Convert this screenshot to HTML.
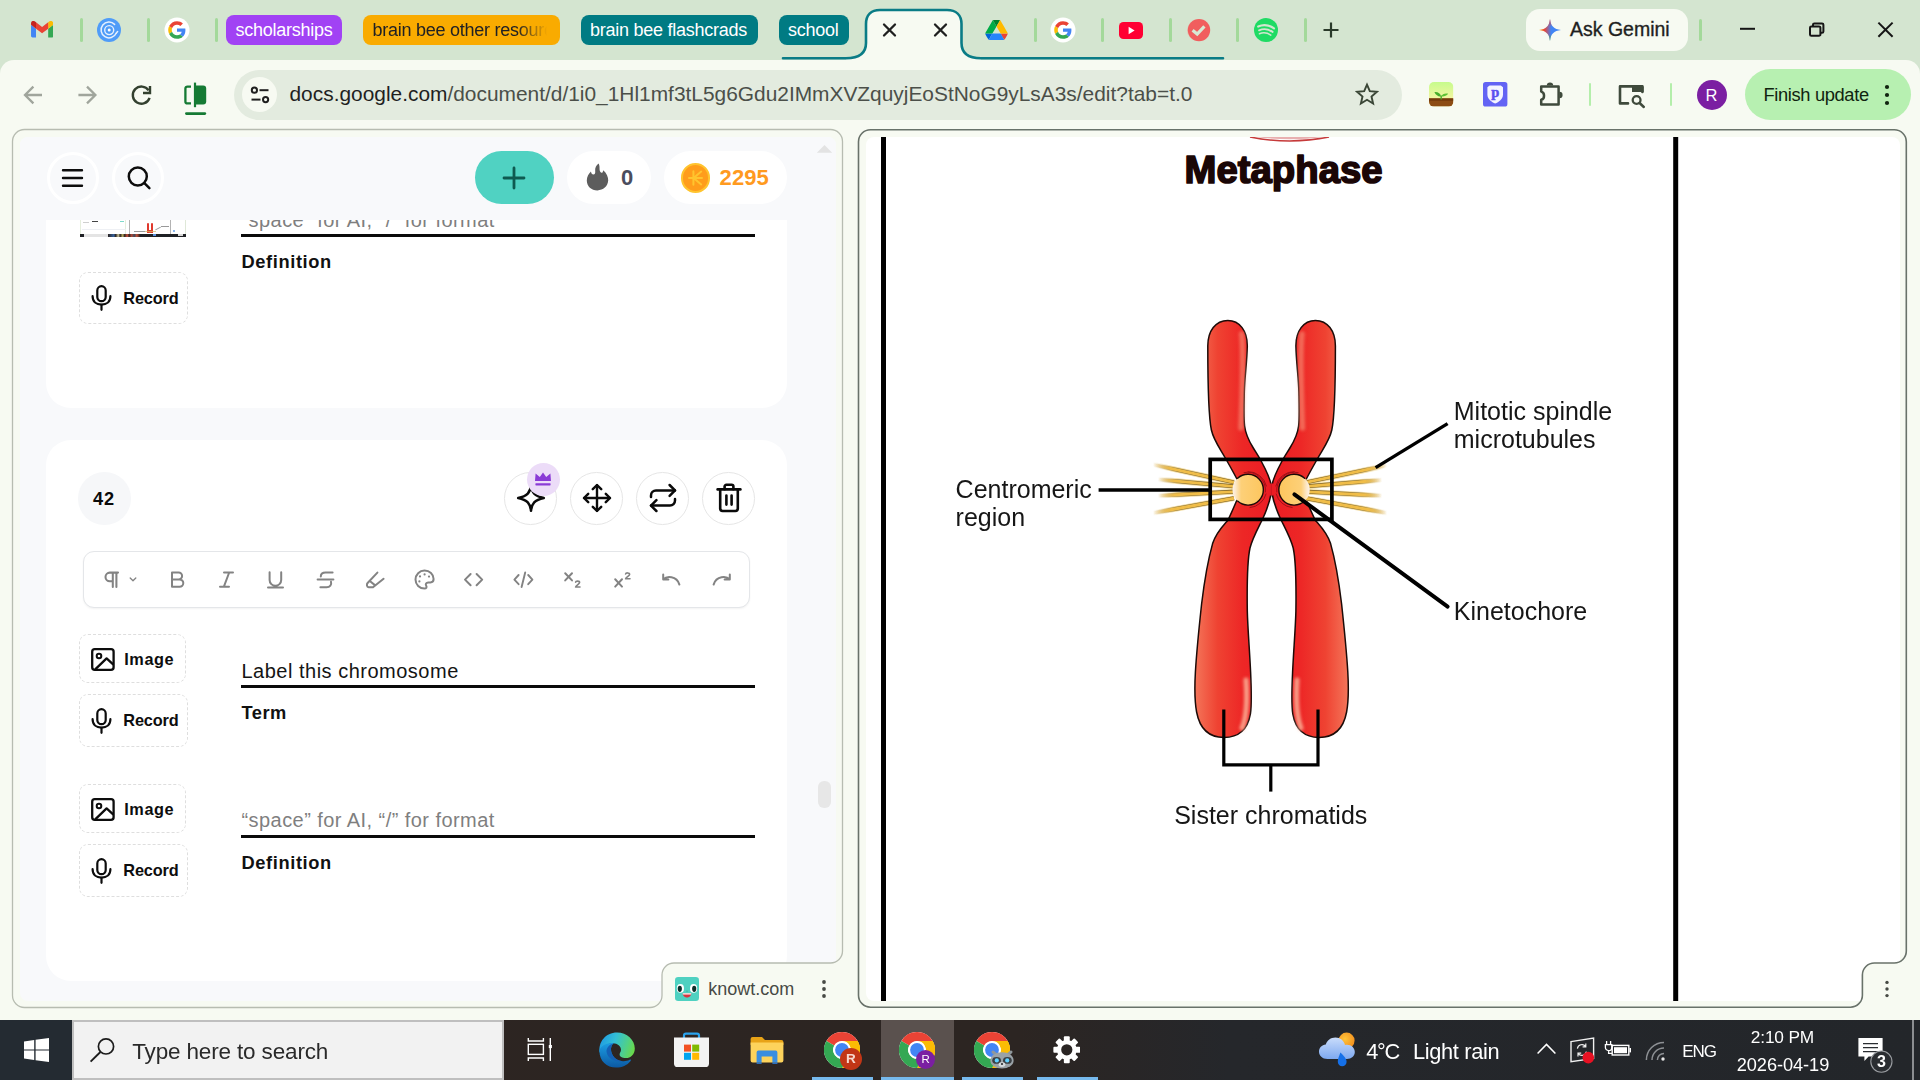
<!DOCTYPE html>
<html><head><meta charset="utf-8">
<style>
*{box-sizing:border-box}
html,body{margin:0;padding:0}
body{width:1920px;height:1080px;position:relative;overflow:hidden;background:#f7faf2;font-family:"Liberation Sans",sans-serif;color:#1f1f1f}
.abs{position:absolute}
.t{position:absolute;white-space:nowrap;line-height:1}
#tabstrip{left:0;top:0;width:1920px;height:80px;background:#d4e5d0}
#toolbar{left:0;top:60px;width:1920px;height:70px;background:#f7faf2;border-radius:14px 14px 0 0}
.sep{position:absolute;width:3px;border-radius:2px;background:#a3d99a}
.chip{position:absolute;top:15px;height:30px;border-radius:8px}
#urlbar{left:234px;top:69.5px;width:1168px;height:50px;border-radius:25px;background:#e3ebdf}
#taskbar{left:0;top:1020px;width:1920px;height:60px;background:linear-gradient(90deg,#2d2522 0%,#2c2522 53%,#25272b 64%,#23262a 100%)}

.circ{top:472px;width:52.6px;height:52.6px;border-radius:50%;border:1px solid #e6e6e6;background:#fff}
.imgbtn,.recbtn{border:1px dashed #dedede;border-radius:9px;background:#fff}
.btxt{font-size:16.3px;font-weight:bold;color:#0d0d0d}
</style></head>
<body>
<svg width="0" height="0" style="position:absolute"><defs>
<g id="mic"><rect x="6.3" y="1.2" width="8.4" height="15" rx="4.2" fill="none" stroke="#0d0d0d" stroke-width="2.2"/><path d="M1.6 11.2 C1.6 16.6 5.4 19.6 10.5 19.6 C15.6 19.6 19.4 16.6 19.4 11.2" fill="none" stroke="#0d0d0d" stroke-width="2.2" stroke-linecap="round"/><path d="M10.5 19.8 V24.8" stroke="#0d0d0d" stroke-width="2.2" stroke-linecap="round"/></g>
<g id="imgico"><rect x="1.2" y="1.2" width="21.4" height="20.6" rx="2.6" fill="none" stroke="#0d0d0d" stroke-width="2.3"/><circle cx="8" cy="8" r="2.3" fill="none" stroke="#0d0d0d" stroke-width="2"/><path d="M4.2 21.4 L15.6 10.4 L22.4 16.6" fill="none" stroke="#0d0d0d" stroke-width="2.3" stroke-linejoin="round"/></g>
</defs></svg>
<!-- ===== TAB STRIP ===== -->
<div id="tabstrip" class="abs"></div>
<div id="toolbar" class="abs"></div>
<!--TABS-START-->
<!-- active tab + group underline -->
<svg class="abs" style="left:0;top:0" width="1920" height="62" viewBox="0 0 1920 62">
  <path d="M846 58.5 C858 58.5 866 54 866 43 L866 24 C866 15 871 10 880 10 L947 10 C956 10 961.5 15 961.5 24 L961.5 43 C961.5 54 969 58.5 981 58.5 L981 62 L846 62 Z" fill="#f7faf2"/>
  <path d="M783 58.2 L846 58.2 C858 58.2 866 54 866 43 L866 24 C866 15 871 10 880 10 L947 10 C956 10 961.5 15 961.5 24 L961.5 43 C961.5 54 969 58.2 981 58.2 L1223 58.2" fill="none" stroke="#0a7c86" stroke-width="2.6" stroke-linecap="round" stroke-linejoin="round"/>
  <!-- tab close Xs -->
  <g stroke="#1f1f1f" stroke-width="2.3" stroke-linecap="round">
    <path d="M884 24.5 L895 35.5 M895 24.5 L884 35.5"/>
    <path d="M935 24.5 L946 35.5 M946 24.5 L935 35.5"/>
  </g>
</svg>
<!-- Gmail -->
<svg class="abs" style="left:31px;top:21.4px" width="22.2" height="16.6" viewBox="0 0 24 18">
  <path d="M0 2.2 V16.4 A1.6 1.6 0 0 0 1.6 18 H5.4 V8.3 L0 4.2Z" fill="#4285f4"/>
  <path d="M18.6 18 H22.4 A1.6 1.6 0 0 0 24 16.4 V4.2 L18.6 8.3Z" fill="#34a853"/>
  <path d="M18.6 1.4 V8.3 L24 4.2 V2.4 C24 0.2 21.6 -0.8 20 0.4Z" fill="#fbbc04"/>
  <path d="M5.4 8.3 V1.4 L12 6.4 L18.6 1.4 V8.3 L12 13.3Z" fill="#ea4335"/>
  <path d="M0 2.4 V4.2 L5.4 8.3 V1.4 L4 0.4 C2.4 -0.8 0 0.2 0 2.4Z" fill="#c5221f"/>
</svg>
<div class="sep" style="left:80px;top:18px;height:24px"></div>
<!-- blue swirl icon -->
<svg class="abs" style="left:97px;top:18px" width="24" height="24" viewBox="0 0 24 24">
  <circle cx="12" cy="12" r="12" fill="#4f9cf8"/>
  <path d="M19.2 15.2 A7.9 7.9 0 1 1 17.6 6.4" fill="none" stroke="#e6f0fe" stroke-width="1.5" stroke-linecap="round"/>
  <path d="M19.2 15.2 L20.6 13.6" fill="none" stroke="#e6f0fe" stroke-width="1.5" stroke-linecap="round"/>
  <circle cx="12.2" cy="12.1" r="4.5" fill="none" stroke="#e6f0fe" stroke-width="1.4"/>
  <circle cx="12.2" cy="12.1" r="1.5" fill="#fff"/>
</svg>
<div class="sep" style="left:147px;top:18px;height:24px"></div>
<!-- Google G 1 -->
<svg class="abs gicon" style="left:164px;top:17px" width="26" height="26" viewBox="0 0 26 26">
  <circle cx="13" cy="13" r="12.5" fill="#fff"/>
  <g transform="translate(4.2,4.2) scale(0.3667)">
  <path fill="#EA4335" d="M24 9.5c3.54 0 6.71 1.22 9.21 3.6l6.85-6.85C35.9 2.38 30.47 0 24 0 14.62 0 6.51 5.38 2.56 13.22l7.98 6.19C12.43 13.72 17.74 9.5 24 9.5z"/>
  <path fill="#4285F4" d="M46.98 24.55c0-1.57-.15-3.09-.38-4.55H24v9.02h12.94c-.58 2.96-2.26 5.48-4.78 7.18l7.73 6c4.51-4.18 7.09-10.36 7.09-17.65z"/>
  <path fill="#FBBC05" d="M10.53 28.59c-.48-1.45-.76-2.99-.76-4.59s.27-3.14.76-4.59l-7.98-6.19C.92 16.46 0 20.12 0 24c0 3.88.92 7.54 2.56 10.78l7.97-6.19z"/>
  <path fill="#34A853" d="M24 48c6.48 0 11.93-2.13 15.89-5.81l-7.73-6c-2.15 1.45-4.92 2.3-8.16 2.3-6.26 0-11.57-4.22-13.47-9.91l-7.98 6.19C6.51 42.62 14.62 48 24 48z"/>
  </g>
</svg>
<div class="sep" style="left:215px;top:18px;height:24px"></div>
<!-- chips -->
<div class="chip" style="left:226px;width:116px;background:#a142f4"></div>
<div class="t" id="c1" style="left:235.5px;top:20.6px;font-size:18px;letter-spacing:-0.25px;color:#fff">scholarships</div>
<div class="chip" style="left:363px;width:196.5px;background:#f9ab00"></div>
<div class="t" id="c2" style="left:372.5px;top:20.6px;font-size:18px;letter-spacing:-0.25px;color:#202124;width:176px;overflow:hidden;-webkit-mask-image:linear-gradient(90deg,#000 82%,transparent 99%)">brain bee other resource</div>
<div class="chip" style="left:580.5px;width:177px;background:#007b83"></div>
<div class="t" id="c3" style="left:590px;top:20.6px;font-size:18px;letter-spacing:-0.25px;color:#fff">brain bee flashcrads</div>
<div class="chip" style="left:779px;width:70px;background:#007b83"></div>
<div class="t" id="c4" style="left:788px;top:20.6px;font-size:18px;letter-spacing:-0.25px;color:#fff">school</div>
<!-- Drive -->
<svg class="abs" style="left:985px;top:20px" width="23" height="20" viewBox="0 0 87.3 78">
  <path d="m6.6 66.85 3.85 6.65c.8 1.4 1.95 2.5 3.3 3.3l13.75-23.8h-27.5c0 1.55.4 3.1 1.2 4.5z" fill="#0066da"/>
  <path d="m43.65 25-13.75-23.8c-1.35.8-2.5 1.9-3.3 3.3l-25.4 44a9.06 9.06 0 0 0 -1.2 4.5h27.5z" fill="#00ac47"/>
  <path d="m73.55 76.8c1.35-.8 2.5-1.9 3.3-3.3l1.6-2.75 7.65-13.25c.8-1.4 1.2-2.95 1.2-4.5h-27.502l5.852 11.5z" fill="#ea4335"/>
  <path d="m43.65 25 13.75-23.8c-1.35-.8-2.9-1.2-4.5-1.2h-18.5c-1.6 0-3.15.45-4.5 1.2z" fill="#00832d"/>
  <path d="m59.8 53h-32.3l-13.75 23.8c1.35.8 2.9 1.2 4.5 1.2h50.8c1.6 0 3.15-.45 4.5-1.2z" fill="#2684fc"/>
  <path d="m73.4 26.5-12.7-22c-.8-1.4-1.95-2.5-3.3-3.3l-13.75 23.8 16.15 28h27.45c0-1.55-.4-3.1-1.2-4.5z" fill="#ffba00"/>
</svg>
<div class="sep" style="left:1034px;top:18px;height:24px"></div>
<!-- Google G 2 -->
<svg class="abs" style="left:1050px;top:17px" width="26" height="26" viewBox="0 0 26 26">
  <circle cx="13" cy="13" r="12.5" fill="#fff"/>
  <g transform="translate(4.2,4.2) scale(0.3667)">
  <path fill="#EA4335" d="M24 9.5c3.54 0 6.71 1.22 9.21 3.6l6.85-6.85C35.9 2.38 30.47 0 24 0 14.62 0 6.51 5.38 2.56 13.22l7.98 6.19C12.43 13.72 17.74 9.5 24 9.5z"/>
  <path fill="#4285F4" d="M46.98 24.55c0-1.57-.15-3.09-.38-4.55H24v9.02h12.94c-.58 2.96-2.26 5.48-4.78 7.18l7.73 6c4.51-4.18 7.09-10.36 7.09-17.65z"/>
  <path fill="#FBBC05" d="M10.53 28.59c-.48-1.45-.76-2.99-.76-4.59s.27-3.14.76-4.59l-7.98-6.19C.92 16.46 0 20.12 0 24c0 3.88.92 7.54 2.56 10.78l7.97-6.19z"/>
  <path fill="#34A853" d="M24 48c6.48 0 11.93-2.13 15.89-5.81l-7.73-6c-2.15 1.45-4.92 2.3-8.16 2.3-6.26 0-11.57-4.22-13.47-9.91l-7.98 6.19C6.51 42.62 14.62 48 24 48z"/>
  </g>
</svg>
<div class="sep" style="left:1101px;top:18px;height:24px"></div>
<!-- YouTube -->
<svg class="abs" style="left:1119px;top:21.5px" width="24" height="17" viewBox="0 0 24 17">
  <rect x="0" y="0" width="24" height="17" rx="4.5" fill="#ff0033"/>
  <path d="M9.6 4.8 L15.6 8.5 L9.6 12.2Z" fill="#fff"/>
</svg>
<div class="sep" style="left:1169px;top:18px;height:24px"></div>
<!-- red check -->
<svg class="abs" style="left:1186px;top:18px" width="26" height="24" viewBox="1186 18 26 24">
  <circle cx="1197" cy="30.2" r="10" fill="#f28b82" opacity=".35"/>
  <circle cx="1199" cy="30.1" r="11.2" fill="#f15e5e"/>
  <path d="M1192.6 30.2 L1197.2 34 L1204.4 26.4" fill="none" stroke="#d8e9d4" stroke-width="3.2" stroke-linecap="butt" stroke-linejoin="miter"/>
</svg>
<div class="sep" style="left:1236px;top:18px;height:24px"></div>
<!-- Spotify -->
<svg class="abs" style="left:1254px;top:17.8px" width="24" height="24" viewBox="0 0 24 24">
  <circle cx="12" cy="12" r="12" fill="#1fdb64"/>
  <path d="M4.2 8.5 Q12 5.0 20 10.3" fill="none" stroke="#d4e5d0" stroke-width="2.2" stroke-linecap="round"/>
  <path d="M5.1 12.3 Q12 9.3 18.6 13.9" fill="none" stroke="#d4e5d0" stroke-width="1.9" stroke-linecap="round"/>
  <path d="M5.4 15.7 Q11.4 13.4 16.8 17.1" fill="none" stroke="#d4e5d0" stroke-width="1.5" stroke-linecap="round"/>
</svg>
<div class="sep" style="left:1304px;top:18px;height:24px"></div>
<!-- new tab plus -->
<svg class="abs" style="left:1322px;top:21px" width="18" height="18" viewBox="0 0 18 18"><path d="M9 1.5 V16.5 M1.5 9 H16.5" stroke="#2a3a2a" stroke-width="2.2" stroke-linecap="butt"/></svg>
<!-- Ask Gemini -->
<div class="abs" style="left:1526px;top:9px;width:162px;height:41.5px;border-radius:14px;background:#f7faf2"></div>
<svg class="abs" style="left:1539px;top:19px" width="22" height="22" viewBox="0 0 22 22">
  <defs>
    <linearGradient id="gm1" x1="0" y1="0" x2="1" y2="0"><stop offset="0" stop-color="#f9ab00"/><stop offset=".25" stop-color="#ea4335"/><stop offset=".55" stop-color="#4285f4"/><stop offset="1" stop-color="#4285f4"/></linearGradient>
    <linearGradient id="gm2" x1="0" y1="0" x2="0" y2="1"><stop offset="0" stop-color="#ea4335"/><stop offset=".35" stop-color="#ea4335" stop-opacity="0"/><stop offset=".7" stop-color="#34a853" stop-opacity="0"/><stop offset="1" stop-color="#34a853"/></linearGradient>
  </defs>
  <path id="gstar" d="M11 0 C11.9 7.2 14.8 10.1 22 11 C14.8 11.9 11.9 14.8 11 22 C10.1 14.8 7.2 11.9 0 11 C7.2 10.1 10.1 7.2 11 0Z" fill="url(#gm1)"/>
  <path d="M11 0 C11.9 7.2 14.8 10.1 22 11 C14.8 11.9 11.9 14.8 11 22 C10.1 14.8 7.2 11.9 0 11 C7.2 10.1 10.1 7.2 11 0Z" fill="url(#gm2)"/>
</svg>
<div class="t" id="askg" style="left:1570px;top:20.2px;font-size:19.5px;color:#1f1f1f;-webkit-text-stroke:0.35px #1f1f1f">Ask Gemini</div>
<div class="sep" style="left:1699px;top:19px;height:22px"></div>
<!-- window controls -->
<svg class="abs" style="left:1730px;top:14px" width="180" height="32" viewBox="0 0 180 32">
  <path d="M10 14.8 H25" stroke="#151515" stroke-width="2"/>
  <path d="M81.4 12.4 H89 A1.4 1.4 0 0 1 90.4 13.8 V20.4 A1.4 1.4 0 0 1 89 21.8 H81.4 A1.4 1.4 0 0 1 80 20.4 V13.8 A1.4 1.4 0 0 1 81.4 12.4Z M83 12.2 V10.8 A1.4 1.4 0 0 1 84.4 9.4 H92 A1.4 1.4 0 0 1 93.4 10.8 V17.4 A1.4 1.4 0 0 1 92 18.8 H90.6" fill="none" stroke="#151515" stroke-width="2"/>
  <path d="M148.4 8.6 L162.6 22.8 M162.6 8.6 L148.4 22.8" stroke="#151515" stroke-width="2"/>
</svg>
<!--TABS-END-->
<!--TOOLBAR-START-->
<!-- nav icons -->
<svg class="abs" style="left:20px;top:82px" width="200" height="36" viewBox="0 0 200 36">
  <!-- back -->
  <path d="M22 13 H5.4 M13.4 4.6 L5 13 L13.4 21.4" fill="none" stroke="#a0a59c" stroke-width="2.3" stroke-linecap="butt" stroke-linejoin="miter"/>
  <!-- forward -->
  <path d="M58.4 13 H75 M67 4.6 L75.4 13 L67 21.4" fill="none" stroke="#a0a59c" stroke-width="2.3"/>
  <!-- reload -->
  <path d="M128.6 8.4 A8.6 8.6 0 1 0 129.6 15.8" fill="none" stroke="#33402f" stroke-width="2.4"/>
  <path d="M130 4 V11 H123" fill="none" stroke="#33402f" stroke-width="2.4"/>
  <!-- split icon -->
  <path d="M171 4.6 H167.4 A2 2 0 0 0 165.4 6.6 V19.4 A2 2 0 0 0 167.4 21.4 H171" fill="none" stroke="#157a34" stroke-width="2.3"/>
  <path d="M175 0.6 V25.2" stroke="#157a34" stroke-width="2.2"/>
  <path d="M175 3.5 H183.2 A3 3 0 0 1 186.2 6.5 V19.5 A3 3 0 0 1 183.2 22.5 H175Z" fill="#157a34"/>
  <rect x="165" y="30.2" width="21.2" height="2.8" rx="1.4" fill="#157a34"/>
</svg>
<div id="urlbar" class="abs"></div>
<div class="abs" style="left:242px;top:77px;width:35px;height:35px;border-radius:50%;background:#f7faf2"></div>
<svg class="abs" style="left:250px;top:85px" width="20" height="20" viewBox="0 0 20 20">
  <g fill="none" stroke="#1f1f1f" stroke-width="2">
    <circle cx="4.4" cy="5.2" r="2.6"/><path d="M9.5 5.2 H18.5"/>
    <circle cx="15.6" cy="14.6" r="2.6"/><path d="M1.5 14.6 H10.5"/>
  </g>
</svg>
<div class="t" id="url" style="left:289.5px;top:84.4px;font-size:20.9px;color:#4b4f49"><span style="color:#1f1f1f">docs.google.com</span>/document/d/1i0_1Hl1mf3tL5g6Gdu2IMmXVZquyjEoStNoG9yLsA3s/edit?tab=t.0</div>
<!-- star -->
<svg class="abs" style="left:1355px;top:82px" width="24" height="24" viewBox="0 0 24 24"><path d="M12 2.6 L14.8 9.2 L21.9 9.8 L16.5 14.5 L18.1 21.5 L12 17.8 L5.9 21.5 L7.5 14.5 L2.1 9.8 L9.2 9.2Z" fill="none" stroke="#3a4636" stroke-width="1.9" stroke-linejoin="miter"/></svg>
<!-- Forest ext -->
<svg class="abs" style="left:1429.4px;top:82px" width="24.4" height="24.6" viewBox="0 0 24.4 24.6">
  <defs><linearGradient id="fg" x1="0" y1="0" x2="0" y2="1"><stop offset="0" stop-color="#c6fb8c"/><stop offset=".65" stop-color="#f1f6a0"/></linearGradient><clipPath id="fc"><rect width="24.4" height="24.6" rx="5"/></clipPath></defs>
  <g clip-path="url(#fc)"><rect width="24.4" height="24.6" fill="url(#fg)"/>
  <rect y="16.4" width="24.4" height="8.2" fill="#8c4b14"/><rect y="16.4" width="24.4" height="2.4" fill="#74390c"/></g>
  <path d="M12.2 17.6 V13.4" stroke="#4aa82a" stroke-width="1.4"/>
  <path d="M12 14.4 C9.6 14.8 6.8 13.4 5.4 10 C8.8 9.6 11.6 11.4 12 14.4Z" fill="#45ad2b"/>
  <path d="M12.4 14.4 C14.4 14.8 17.4 14.2 19.2 11.8 C16.2 11 13 12 12.4 14.4Z" fill="#5cc234"/>
</svg>
<!-- P shield ext -->
<svg class="abs" style="left:1483.4px;top:82px" width="24.4" height="24.6" viewBox="0 0 24.4 24.6">
  <rect width="24.4" height="24.6" rx="2.6" fill="#6363f4"/>
  <path d="M4.4 5.2 L6.6 3.6 H17.8 L20 5.2 V12.6 C20 17.4 15.6 20.2 12.2 21.6 C8.8 20.2 4.4 17.4 4.4 12.6Z" fill="#f4f4ff"/>
  <text x="12.4" y="14.6" font-family="Liberation Serif" font-weight="bold" font-size="14.5" fill="#5a4ff0" stroke="#5a4ff0" stroke-width=".5" text-anchor="middle">p</text>
</svg>
<!-- puzzle -->
<svg class="abs" style="left:1536px;top:80px" width="30" height="28" viewBox="1536 80 30 28">
  <path d="M1541.2 86.4 H1558.6 V104.4 H1541.2 V99.8 C1545 99 1545 92.4 1541.2 91.6Z" fill="none" stroke="#3f4a3c" stroke-width="2.5" stroke-linejoin="round"/>
  <path d="M1546.8 85.6 A3.2 3.2 0 0 1 1553.2 85.6Z" fill="#3f4a3c"/>
  <path d="M1559.4 91.8 A3.2 3.2 0 0 1 1559.4 98.2Z" fill="#3f4a3c"/>
</svg>
<div class="sep" style="left:1588.5px;top:82.5px;height:23.5px;width:2.6px;background:#b4eeab"></div>
<!-- screenshot search -->
<svg class="abs" style="left:1616px;top:82px" width="32" height="28" viewBox="1616 82 32 28">
  <path d="M1628 103.4 H1620 V86.4 H1642.4 V92" fill="none" stroke="#3f4a3c" stroke-width="2.6" stroke-linejoin="round" stroke-linecap="round"/>
  <path d="M1632 85.2 H1641.6 A2 2 0 0 1 1643.6 87.2 V92 H1632Z" fill="#3f4a3c"/>
  <circle cx="1636.6" cy="100" r="3.9" fill="none" stroke="#3f4a3c" stroke-width="2.3"/>
  <path d="M1639.6 103 L1643.8 107" stroke="#3f4a3c" stroke-width="2.5" stroke-linecap="round"/>
</svg>
<div class="sep" style="left:1669.7px;top:82.5px;height:23.5px;width:2.6px;background:#b4eeab"></div>
<!-- profile -->
<div class="abs" style="left:1696.5px;top:79.5px;width:30px;height:30px;border-radius:50%;background:#7b1fa2"></div>
<div class="t" id="prof" style="left:1705.6px;top:86.8px;font-size:16.5px;color:#fff">R</div>
<!-- Finish update -->
<div class="abs" style="left:1744.5px;top:69px;width:166px;height:51px;border-radius:25.5px;background:#b7f0b1"></div>
<div class="t" id="fin" style="left:1763.5px;top:85.6px;font-size:18.3px;letter-spacing:-0.35px;color:#10240f">Finish update</div>
<svg class="abs" style="left:1882px;top:82px" width="10" height="26" viewBox="0 0 10 26"><circle cx="5" cy="5" r="2.1" fill="#10240f"/><circle cx="5" cy="13" r="2.1" fill="#10240f"/><circle cx="5" cy="21" r="2.1" fill="#10240f"/></svg>
<!--TOOLBAR-END-->
<!--LEFT-START-->
<div id="lp" class="abs" style="left:20px;top:137px;width:816px;height:864px;background:#f8f9fb;border-radius:8px;overflow:hidden">
 <div class="abs" style="left:-20px;top:-137px;width:1920px;height:1080px">
  <!-- card 41 (cut by header) -->
  <div class="abs" style="left:46px;top:180px;width:741px;height:227.5px;background:#fff;border-radius:25px"></div>
  <!-- thumbnail -->
  <div class="abs" style="left:80px;top:200px;width:106px;height:37px;background:#fff;overflow:hidden">
    <div class="abs" style="left:0;top:0;width:46px;height:34px;border-left:1px solid #e6eedd;border-right:1px solid #e6eedd"></div>
    <div class="abs" style="left:2px;top:29px;width:44px;height:1px;background:#eef0f4"></div>
    <div class="abs" style="left:12px;top:21px;width:6px;height:1.2px;background:#444"></div>
    <div class="abs" style="left:3px;top:21.5px;width:6px;height:1px;background:#cfcfcf"></div>
    <div class="abs" style="left:40px;top:21px;width:4px;height:1.2px;background:#7fdacb"></div>
    <div class="abs" style="left:49.2px;top:0;width:1.2px;height:34px;background:#b3b3b3"></div>
    <div class="abs" style="left:89.8px;top:0;width:1.2px;height:34px;background:#b3b3b3"></div>
    <div class="abs" style="left:104.5px;top:0;width:1px;height:34px;background:#dfe8d8"></div>
    <div class="abs" style="left:66.6px;top:22.6px;width:2.4px;height:10px;background:#e0392d;border-radius:1.2px 1.2px 0 0"></div>
    <div class="abs" style="left:70.8px;top:22.6px;width:2.4px;height:10px;background:#e0392d;border-radius:1.2px 1.2px 0 0"></div>
    <div class="abs" style="left:66.6px;top:30.4px;width:6.6px;height:3px;background:#d9432c;border-radius:0 0 3px 3px"></div>
    <div class="abs" style="left:64px;top:30.6px;width:12px;height:1.6px;background:#d9b86a;opacity:.7"></div>
    <div class="abs" style="left:54px;top:30.8px;width:11px;height:.8px;background:#9a9a9a"></div>
    <div class="abs" style="left:75px;top:28px;width:6px;height:.8px;background:#9a9a9a;transform:rotate(-28deg)"></div>
    <div class="abs" style="left:81px;top:26.4px;width:8px;height:1px;background:#999"></div>
    <div class="abs" style="left:93px;top:30px;width:2px;height:2.4px;background:#8ab8ee"></div>
    <div class="abs" style="left:0;top:33.6px;width:106px;height:3.4px;background:#1f2125"></div>
    <div class="abs" style="left:4px;top:33.6px;width:24px;height:3.4px;background:#e4e4e4"></div>
    <div class="abs" style="left:28px;top:33.6px;width:32px;height:3.4px;background:linear-gradient(90deg,#2b2320,#35609a 18%,#2b2320 24%,#c8c39a 32%,#2b2320 38%,#b9ad62 46%,#2b2320 52%,#c9503a 60%,#2b2320 66%,#b04a3a 74%,#3c4a5a 82%,#c0503a 90%,#2b2320)"></div>
    <div class="abs" style="left:73px;top:34.4px;width:3px;height:1.6px;background:#5a8fdc"></div>
    <div class="abs" style="left:98px;top:34.2px;width:5px;height:2px;background:#d8d8d8"></div>
  </div>
  <div class="t" id="ph1" style="left:241.5px;top:209.8px;font-size:20px;letter-spacing:0.44px;color:#7f7f7f">“space” for AI, “/” for format</div>
  <div class="abs" style="left:241px;top:233.9px;width:514px;height:3.3px;background:#0a0a0a"></div>
  <div class="t" id="def1" style="left:241.5px;letter-spacing:0.6px;top:253.2px;font-size:18.3px;font-weight:bold;color:#111">Definition</div>
  <div class="recbtn abs" style="left:78.5px;top:271.5px;width:109px;height:52px"></div>
  <svg class="abs micico" style="left:91px;top:285px" width="21" height="26" viewBox="0 0 21 26"><use href="#mic"/></svg>
  <div class="t btxt" style="left:123.3px;top:290px;letter-spacing:-0.15px">Record</div>

  <!-- header (covers scrolled content) -->
  <div class="abs" style="left:20px;top:137px;width:816px;height:83px;background:#f8f9fb"></div>
  <div class="abs" style="left:46.5px;top:151.5px;width:52px;height:52px;border-radius:50%;border:3px solid #fff"></div>
  <svg class="abs" style="left:61px;top:167px" width="23" height="22" viewBox="0 0 23 22"><path d="M2 3.2 H21 M2 11 H21 M2 18.8 H21" stroke="#0d0d0d" stroke-width="2.4" stroke-linecap="round"/></svg>
  <div class="abs" style="left:112.4px;top:151.5px;width:52px;height:52px;border-radius:50%;border:3px solid #fff"></div>
  <svg class="abs" style="left:126px;top:165px" width="26" height="26" viewBox="0 0 26 26"><circle cx="11.8" cy="11.6" r="9" fill="none" stroke="#0d0d0d" stroke-width="2.5"/><path d="M18.4 18.2 L23.4 23.2" stroke="#0d0d0d" stroke-width="2.5" stroke-linecap="round"/></svg>
  <!-- plus button -->
  <div class="abs" style="left:474.8px;top:151px;width:79px;height:53px;border-radius:26.5px;background:#50d2c2"></div>
  <svg class="abs" style="left:502px;top:166px" width="24" height="24" viewBox="0 0 24 24"><path d="M12 2 V22 M2 12 H22" stroke="#0e5a50" stroke-width="2.8" stroke-linecap="round"/></svg>
  <!-- streak -->
  <div class="abs" style="left:566.7px;top:151px;width:84px;height:53px;border-radius:26.5px;background:#fff"></div>
  <svg class="abs" style="left:586px;top:163px" width="23" height="28" viewBox="0 0 23 28"><path d="M12.6 0.6 C14.4 4.2 12.8 6.6 14.4 9 C15.6 10.6 17 9.6 17.2 7.2 C20.6 10 22.4 14.2 22.2 17.6 C21.8 23.4 17.2 27.4 11.4 27.4 C5.4 27.4 0.8 23.2 0.8 17.4 C0.8 13.6 2.8 10.8 5 8.6 C5.2 10.4 6 11.6 7.4 11.6 C9 11.6 9.4 10 9.2 8.2 C8.8 5 10.2 2.2 12.6 0.6Z" fill="#5d5d5d"/></svg>
  <div class="t" id="zero" style="left:621.1px;top:166.5px;font-size:22px;font-weight:bold;color:#4a4d5e">0</div>
  <!-- coins -->
  <div class="abs" style="left:663.9px;top:151px;width:123px;height:53px;border-radius:26.5px;background:#fff"></div>
  <div class="abs" style="left:680.8px;top:163px;width:29.5px;height:29.5px;border-radius:50%;background:#ff9d1b;border:2.6px solid #ffc42e"></div>
  <svg class="abs" style="left:688px;top:170px" width="15" height="16" viewBox="0 0 15 16"><path d="M5.4 1.2 V14.8 M1 8 H14 M13.2 1.6 L5.6 8 L13.2 14.4" fill="none" stroke="#ffc42e" stroke-width="2" stroke-linecap="round" stroke-linejoin="round"/></svg>
  <div class="t" id="coins" style="left:719.6px;top:166.5px;font-size:22px;font-weight:bold;color:#ff9a1f;letter-spacing:0.1px">2295</div>

  <!-- card 42 -->
  <div class="abs" style="left:46px;top:439.5px;width:741px;height:541px;background:#fff;border-radius:25px"></div>
  <div class="abs" style="left:78.3px;top:472px;width:52.6px;height:52.6px;border-radius:50%;background:#f6f7f9"></div>
  <div class="t" id="n42" style="left:93px;top:490.2px;font-size:18.2px;font-weight:bold;color:#0a0a0a;letter-spacing:0.9px">42</div>
  <!-- action circles -->
  <div class="abs circ" style="left:504.4px"></div>
  <div class="abs circ" style="left:570.4px"></div>
  <div class="abs circ" style="left:636.2px"></div>
  <div class="abs circ" style="left:702.2px"></div>
  
  <!-- sparkle -->
  <svg class="abs" style="left:515.8px;top:483.4px" width="30" height="30" viewBox="0 0 30 30"><path d="M15 2.2 C15.7 9.4 18.6 13 27.8 15 C18.6 17 15.7 20.6 15 27.8 C14.3 20.6 11.4 17 2.2 15 C11.4 13 14.3 9.4 15 2.2Z" fill="none" stroke="#0a0a0a" stroke-width="2.5" stroke-linejoin="round"/></svg>
  <div class="abs" style="left:526.8px;top:462.9px;width:33px;height:33px;border-radius:50%;background:#ecdcf8"></div>
  <svg class="abs" style="left:534px;top:472px" width="18" height="15" viewBox="0 0 18 15"><path d="M1 9 L1.6 1.6 L5.8 5 L9 0.4 L12.2 5 L16.4 1.6 L17 9Z" fill="#8a3bd6"/><rect x="1.4" y="11.2" width="15.2" height="2.2" rx=".6" fill="#8a3bd6"/></svg>
  <!-- move -->
  <svg class="abs" style="left:581.8px;top:483px" width="30" height="30" viewBox="0 0 30 30"><g fill="none" stroke="#0a0a0a" stroke-width="2.4" stroke-linecap="round" stroke-linejoin="round"><path d="M15 2.2 V27.8 M2.2 15 H27.8"/><path d="M10.8 6.2 L15 2 L19.2 6.2 M10.8 23.8 L15 28 L19.2 23.8 M6.2 10.8 L2 15 L6.2 19.2 M23.8 10.8 L28 15 L23.8 19.2"/></g></svg>
  <!-- swap -->
  <svg class="abs" style="left:648.5px;top:483px" width="28" height="30" viewBox="0 0 28 30"><g fill="none" stroke="#0a0a0a" stroke-width="2.5" stroke-linecap="round" stroke-linejoin="round"><path d="M20.6 2 L26 7.4 L20.6 12.8"/><path d="M26 7.4 H7 A5 5 0 0 0 2 12.4 V14"/><path d="M7.4 28 L2 22.6 L7.4 17.2"/><path d="M2 22.6 H21 A5 5 0 0 0 26 17.6 V16"/></g></svg>
  <!-- trash -->
  <svg class="abs" style="left:715.5px;top:483px" width="26" height="30" viewBox="0 0 26 30"><g fill="none" stroke="#0a0a0a" stroke-width="2.6" stroke-linecap="round" stroke-linejoin="round"><path d="M1.6 6.4 H24.4"/><path d="M8.6 6.2 V3.6 A1.8 1.8 0 0 1 10.4 1.8 H15.6 A1.8 1.8 0 0 1 17.4 3.6 V6.2"/><path d="M4.2 6.6 V25.6 A2.4 2.4 0 0 0 6.6 28 H19.4 A2.4 2.4 0 0 0 21.8 25.6 V6.6"/><path d="M10.4 12.6 V21.6 M15.6 12.6 V21.6"/></g></svg>

  <!-- formatting toolbar -->
  <div class="abs" style="left:83.3px;top:550.8px;width:666.4px;height:56.8px;border:1px solid #e4e6e9;border-radius:11px;background:#fff;box-shadow:0 1px 2px rgba(0,0,0,.05)"></div>
  
  <svg class="abs" style="left:83px;top:551px" width="667" height="57" viewBox="83 551 667 57">
   <g fill="none" stroke="#838383" stroke-width="1.9" stroke-linecap="round" stroke-linejoin="round">
    <!-- pilcrow -->
    <path d="M118 572.6 H109.8 A4.3 4.3 0 0 0 109.8 581.2 H112.8 M112.8 572.6 V587 M116.4 572.6 V587" stroke-width="2.05"/>
    <path d="M130.2 578 L133 580.8 L135.8 578" stroke-width="1.3"/>
    <!-- B -->
    <path d="M172 572.4 V586.8 M172 572.4 H178.6 A3.5 3.5 0 0 1 178.6 579.4 H172 M172 579.4 H179.6 A3.7 3.7 0 0 1 179.6 586.8 H172" stroke-width="2"/>
    <!-- I -->
    <path d="M224 572.5 H233 M220 586.8 H229 M229.2 572.5 L223.8 586.8" stroke-width="2"/>
    <!-- U -->
    <path d="M269.6 572.2 V580 A5.8 5.8 0 0 0 281.2 580 V572.2 M268 587.6 H283" stroke-width="2"/>
    <!-- S -->
    <path d="M332.6 572.6 H325.6 C322.6 572.6 320.8 574.2 320.8 576.6 M317.6 579.6 H333.4 M331 581.8 C331.8 584.8 330 587.2 326.6 587.2 H320.4" stroke-width="2"/>
    <!-- highlighter -->
    <path d="M377.4 572.6 L367.6 583 C366.4 584.4 366.8 587.2 368.6 587.2 H373 L383.6 578.8 M369.8 581 L375.2 585.4" stroke-width="2"/>
    <!-- palette -->
    <path d="M424.5 570.6 A9 9 0 1 0 424.5 588.6 C426.4 588.6 427 587.2 426.2 585.8 C425.2 584 426.2 582.4 428.2 582.4 H430.4 C432.4 582.4 433.6 581 433.6 579 C433.6 574.2 429.6 570.6 424.5 570.6Z" stroke-width="2"/>
    <circle cx="420" cy="576.4" r="1.1" fill="#838383" stroke="none"/><circle cx="424.6" cy="574.4" r="1.1" fill="#838383" stroke="none"/><circle cx="429" cy="576.6" r="1.1" fill="#838383" stroke="none"/><circle cx="419.4" cy="581.4" r="1.1" fill="#838383" stroke="none"/>
    <!-- <> -->
    <path d="M470.6 574 L465 579.6 L470.6 585.2 M476.6 574 L482.2 579.6 L476.6 585.2" stroke-width="2"/>
    <!-- </> -->
    <path d="M518.6 575 L514.4 579.6 L518.6 584.2 M528.2 575 L532.4 579.6 L528.2 584.2 M525.2 572.4 L521.6 587" stroke-width="1.9"/>
    <!-- x2 sub -->
    <path d="M565.2 573.2 L572 580.4 M572 573.2 L565.2 580.4" stroke-width="2"/>
    <path d="M575.6 582.2 C575.8 580.8 579.6 580.6 579.6 582.6 C579.6 584 575.8 585.6 575.6 587 H580" stroke-width="1.6"/>
    <!-- x2 sup -->
    <path d="M615.2 579.2 L622 586.6 M622 579.2 L615.2 586.6" stroke-width="2"/>
    <path d="M625.6 574 C625.8 572.6 629.6 572.4 629.6 574.4 C629.6 575.8 625.8 577.4 625.6 578.8 H630" stroke-width="1.6"/>
    <!-- undo -->
    <path d="M663.2 574.6 V579.6 H668.4 M663.4 579.4 C666.4 576 676.6 575.4 679.4 584.6" stroke-width="2"/>
    <!-- redo -->
    <path d="M729.8 574.6 V579.6 H724.6 M729.6 579.4 C726.6 576 716.4 575.4 713.6 584.6" stroke-width="2"/>
   </g>
  </svg>

  <!-- term row -->
  <div class="imgbtn abs" style="left:78.5px;top:634.3px;width:107px;height:48.8px"></div>
  <svg class="abs" style="left:91px;top:647.5px" width="24" height="23" viewBox="0 0 24 23"><use href="#imgico"/></svg>
  <div class="t btxt" style="left:124.3px;top:651.3px;letter-spacing:0.55px">Image</div>
  <div class="recbtn abs" style="left:78.5px;top:694px;width:109px;height:52.5px"></div>
  <svg class="abs micico" style="left:91px;top:707.5px" width="21" height="26" viewBox="0 0 21 26"><use href="#mic"/></svg>
  <div class="t btxt" style="left:123.3px;top:712.3px;letter-spacing:-0.15px">Record</div>
  <div class="t" id="lbl" style="left:241.5px;top:660.5px;font-size:20px;letter-spacing:0.5px;color:#141414">Label this chromosome</div>
  <div class="abs" style="left:241px;top:684.8px;width:514px;height:3.3px;background:#0a0a0a"></div>
  <div class="t" id="term" style="left:241.5px;letter-spacing:0.5px;top:703.5px;font-size:18.3px;font-weight:bold;color:#111">Term</div>
  <!-- definition row -->
  <div class="imgbtn abs" style="left:78.5px;top:784.3px;width:107px;height:48.8px"></div>
  <svg class="abs" style="left:91px;top:797.5px" width="24" height="23" viewBox="0 0 24 23"><use href="#imgico"/></svg>
  <div class="t btxt" style="left:124.3px;top:801.3px;letter-spacing:0.55px">Image</div>
  <div class="recbtn abs" style="left:78.5px;top:844px;width:109px;height:52.5px"></div>
  <svg class="abs micico" style="left:91px;top:857.5px" width="21" height="26" viewBox="0 0 21 26"><use href="#mic"/></svg>
  <div class="t btxt" style="left:123.3px;top:862.3px;letter-spacing:-0.15px">Record</div>
  <div class="t" id="ph2" style="left:241.5px;top:810.4px;font-size:20px;letter-spacing:0.44px;color:#7f7f7f">“space” for AI, “/” for format</div>
  <div class="abs" style="left:241px;top:834.8px;width:514px;height:3.3px;background:#0a0a0a"></div>
  <div class="t" id="def2" style="left:241.5px;letter-spacing:0.6px;top:853.5px;font-size:18.3px;font-weight:bold;color:#111">Definition</div>
  <!-- scrollbar -->
  <svg class="abs" style="left:816px;top:144px" width="17" height="10" viewBox="0 0 17 10"><path d="M8.5 1 L16.2 8.8 H0.8Z" fill="#e3e3e3"/></svg>
  <div class="abs" style="left:818px;top:781px;width:12.5px;height:26.5px;border-radius:6px;background:#e7e7e7"></div>
 </div>
</div>
<!-- notch (knowt.com mini toolbar) -->
<div class="abs" style="left:662px;top:963px;width:186px;height:50px;background:#f7faf2;border-top-left-radius:12px"></div>
<svg class="abs" style="left:675px;top:977px" width="24" height="24" viewBox="0 0 24 24">
  <rect width="24" height="24" rx="3.2" fill="#4fd1c1"/>
  <ellipse cx="5.4" cy="11.4" rx="3.6" ry="4.4" fill="#fff"/><ellipse cx="18.6" cy="11.4" rx="3.6" ry="4.4" fill="#fff"/>
  <ellipse cx="4.8" cy="11.8" rx="2.1" ry="3.1" fill="#0e2f2b"/><ellipse cx="19.2" cy="11.8" rx="2.1" ry="3.1" fill="#0e2f2b"/>
  <path d="M7.6 16.2 H16.4 C16 19.6 13.8 20.4 12 20.4 C10.2 20.4 8 19.6 7.6 16.2Z" fill="#d8343f"/>
  <path d="M7.6 16.2 H16.4 L16.1 17.6 H7.9Z" fill="#fff"/>
  <path d="M11 14.2 H13" stroke="#3bb5a6" stroke-width=".8"/>
</svg>
<div class="t" id="knowt" style="left:708.3px;top:979.6px;font-size:18px;color:#474a45">knowt.com</div>
<svg class="abs" style="left:820px;top:979px" width="8" height="20" viewBox="0 0 8 20"><circle cx="4" cy="3" r="1.9" fill="#474a45"/><circle cx="4" cy="10" r="1.9" fill="#474a45"/><circle cx="4" cy="17" r="1.9" fill="#474a45"/></svg>
<!--LEFT-END-->
<!--RIGHT-START-->
<div id="rp" class="abs" style="left:866px;top:137px;width:1034px;height:864px;background:#fff;border-radius:8px;overflow:hidden">
<svg class="abs" style="left:0;top:0" width="1034" height="864" viewBox="866 137 1034 864">
  <defs>
    <linearGradient id="gL" gradientUnits="userSpaceOnUse" x1="1194" y1="0" x2="1272" y2="0"><stop offset="0" stop-color="#f4775b"/><stop offset=".3" stop-color="#ef4332"/><stop offset=".62" stop-color="#ed2726"/><stop offset="1" stop-color="#ec1c24"/></linearGradient>
    <linearGradient id="gR" gradientUnits="userSpaceOnUse" x1="1349" y1="0" x2="1271" y2="0"><stop offset="0" stop-color="#f4775b"/><stop offset=".3" stop-color="#ef4332"/><stop offset=".62" stop-color="#ed2726"/><stop offset="1" stop-color="#ec1c24"/></linearGradient>
    <linearGradient id="kinL" x1="0" y1="0" x2="1" y2="0"><stop offset="0" stop-color="#fdf3ea"/><stop offset=".1" stop-color="#fde8c8"/><stop offset=".28" stop-color="#fdd078"/><stop offset="1" stop-color="#fdc65e"/></linearGradient>
    <linearGradient id="kinR" x1="1" y1="0" x2="0" y2="0"><stop offset="0" stop-color="#fdf3ea"/><stop offset=".1" stop-color="#fde8c8"/><stop offset=".28" stop-color="#fdd078"/><stop offset="1" stop-color="#fdc65e"/></linearGradient>
    <linearGradient id="rUL" x1="0" y1="0" x2="1" y2="0"><stop offset="0" stop-color="#f0583f"/><stop offset=".3" stop-color="#ee3a2b"/><stop offset=".62" stop-color="#ee3327"/><stop offset=".88" stop-color="#f47a5f"/><stop offset="1" stop-color="#f26a50"/></linearGradient>
    <linearGradient id="rUR" x1="0" y1="0" x2="1" y2="0"><stop offset="0" stop-color="#f58a70"/><stop offset=".22" stop-color="#ef3f2e"/><stop offset=".6" stop-color="#ee3327"/><stop offset="1" stop-color="#f26a50"/></linearGradient>
    <linearGradient id="rLL" x1="0" y1="0" x2="1" y2="0"><stop offset="0" stop-color="#f4755a"/><stop offset=".35" stop-color="#ef4230"/><stop offset=".7" stop-color="#ed2a24"/><stop offset="1" stop-color="#ee3428"/></linearGradient>
    <linearGradient id="rLR" x1="0" y1="0" x2="1" y2="0"><stop offset="0" stop-color="#ee3428"/><stop offset=".3" stop-color="#ed2a24"/><stop offset=".65" stop-color="#ef4230"/><stop offset="1" stop-color="#f4755a"/></linearGradient>
    <filter id="blur1" x="-50%" y="-10%" width="200%" height="120%"><feGaussianBlur stdDeviation="1.6"/></filter>
    <radialGradient id="kin" cx=".6" cy=".5" r=".6"><stop offset="0" stop-color="#ffd67a"/><stop offset=".7" stop-color="#fdc55a"/><stop offset="1" stop-color="#f6b84a"/></radialGradient>
    <linearGradient id="mtL" x1="0" y1="0" x2="1" y2="0"><stop offset="0" stop-color="#f0bd48" stop-opacity="0"/><stop offset=".22" stop-color="#f0bd48" stop-opacity="1"/><stop offset="1" stop-color="#f0bd48"/></linearGradient>
    <linearGradient id="mtR" x1="1" y1="0" x2="0" y2="0"><stop offset="0" stop-color="#f0bd48" stop-opacity="0"/><stop offset=".22" stop-color="#f0bd48" stop-opacity="1"/><stop offset="1" stop-color="#f0bd48"/></linearGradient>
    <linearGradient id="mtLd" x1="0" y1="0" x2="1" y2="0"><stop offset="0" stop-color="#b08a3a" stop-opacity="0"/><stop offset=".3" stop-color="#7d6428" stop-opacity=".85"/><stop offset="1" stop-color="#6f5620"/></linearGradient>
    <linearGradient id="mtRd" x1="1" y1="0" x2="0" y2="0"><stop offset="0" stop-color="#b08a3a" stop-opacity="0"/><stop offset=".3" stop-color="#7d6428" stop-opacity=".85"/><stop offset="1" stop-color="#6f5620"/></linearGradient>
    <linearGradient id="mtLo" x1="0" y1="0" x2="1" y2="0"><stop offset="0" stop-color="#f6e3b0" stop-opacity="0"/><stop offset=".25" stop-color="#f3dca0" stop-opacity="1"/><stop offset="1" stop-color="#f3dca0"/></linearGradient>
    <linearGradient id="mtRo" x1="1" y1="0" x2="0" y2="0"><stop offset="0" stop-color="#f6e3b0" stop-opacity="0"/><stop offset=".25" stop-color="#f3dca0" stop-opacity="1"/><stop offset="1" stop-color="#f3dca0"/></linearGradient>
  </defs>
  <!-- page side rules -->
  <rect x="881" y="137" width="5" height="864" fill="#000"/>
  <rect x="1673.2" y="137" width="5" height="864" fill="#000"/>
  <!-- remnant of previous figure -->
  <path d="M1250 137 Q1290 145 1329 137" fill="none" stroke="#c63a3a" stroke-width="1.6"/>
  <path d="M1256 137 Q1290 141.5 1324 137 Z" fill="#e8b0b0"/>
  <!-- title -->
  <text id="meta" x="1184.6" y="183" font-family="Liberation Sans" font-weight="bold" font-size="39.5" fill="#1a0606" stroke="#1a0606" stroke-width="1.7" stroke-linejoin="round" textLength="198" lengthAdjust="spacingAndGlyphs">Metaphase</text>

  <!-- chromatids -->
  <g stroke="#1c0b08" stroke-width="1.5" stroke-linejoin="round">
    <path d="M 1207.8 346 C 1207.8 331 1215.6 320.4 1227.8 320.4 C 1239.8 320.4 1247.4 331 1247.3 346 C 1247 362 1244.6 378 1244.3 392 C 1244 406 1243.6 418 1244.6 426 C 1245.6 434 1249 441 1253 447.5 C 1256 452.5 1259 457 1261.4 461.5 C 1266 470 1270 478 1271.3 485.5 L 1271.3 493 C 1270 500.5 1267 509.5 1262.6 519 C 1258 528.5 1252.6 538 1250 548 C 1247.4 560 1247 590 1247.3 611 C 1247.8 630 1249.6 650 1250.6 672 C 1251.4 690 1252 704 1250.4 714 C 1247.6 730 1238 737.4 1224 737.4 C 1210 737.4 1200 730 1196.6 712 C 1194.4 700 1194.4 690 1195.4 672 C 1196.6 652 1199 628 1201.6 604 C 1204 584 1207.4 562 1212.6 543.6 C 1216 533 1222 527 1227.8 520.4 C 1232 512 1236 502 1240 493 L 1240 485 C 1236 477 1231 468 1225.6 458.5 C 1219 447 1213.6 440 1211.4 430 C 1208.6 417 1207.8 380 1207.8 346 Z" fill="url(#gL)"/>
    <path d="M 1335.4 346.0 C 1335.4 331.0 1327.6 320.4 1315.4 320.4 C 1303.4 320.4 1295.8 331.0 1295.9 346.0 C 1296.2 362.0 1298.6 378.0 1298.9 392.0 C 1299.2 406.0 1299.6 418.0 1298.6 426.0 C 1297.6 434.0 1294.2 441.0 1290.2 447.5 C 1287.2 452.5 1284.2 457.0 1281.8 461.5 C 1277.2 470.0 1273.2 478.0 1271.9 485.5 L 1271.9 493.0 C 1273.2 500.5 1276.2 509.5 1280.6 519.0 C 1285.2 528.5 1290.6 538.0 1293.2 548.0 C 1295.8 560.0 1296.2 590.0 1295.9 611.0 C 1295.4 630.0 1293.6 650.0 1292.6 672.0 C 1291.8 690.0 1291.2 704.0 1292.8 714.0 C 1295.6 730.0 1305.2 737.4 1319.2 737.4 C 1333.2 737.4 1343.2 730.0 1346.6 712.0 C 1348.8 700.0 1348.8 690.0 1347.8 672.0 C 1346.6 652.0 1344.2 628.0 1341.6 604.0 C 1339.2 584.0 1335.8 562.0 1330.6 543.6 C 1327.2 533.0 1321.2 527.0 1315.4 520.4 C 1311.2 512.0 1307.2 502.0 1303.2 493.0 L 1303.2 485.0 C 1307.2 477.0 1312.2 468.0 1317.6 458.5 C 1324.2 447.0 1329.6 440.0 1331.8 430.0 C 1334.6 417.0 1335.4 380.0 1335.4 346.0 Z" fill="url(#gR)"/>
  </g>
  <path d="M1269.6 483.5 H1273 V495.5 H1269.6Z" fill="#ec1c24"/>
  <path d="M1271.3 484 V495" stroke="#c1141d" stroke-width=".8"/>
  <!-- highlights -->
  <g filter="url(#blur1)">
  <path d="M1241.6 334 C1244 352 1242 395 1241 428" fill="none" stroke="#f69578" stroke-width="5.5" stroke-linecap="round" opacity=".6"/>
  <path d="M1302 334 C1299.6 352 1301.4 395 1302.4 428" fill="none" stroke="#f69578" stroke-width="5.5" stroke-linecap="round" opacity=".6"/>
  <path d="M1246 680 C1247.4 700 1247 716 1242 728" fill="none" stroke="#f9a890" stroke-width="5" stroke-linecap="round" opacity=".9"/>
  <path d="M1297 680 C1295.8 700 1296.4 716 1301 728" fill="none" stroke="#f9a890" stroke-width="5" stroke-linecap="round" opacity=".9"/>
  </g>
  <!-- microtubules left -->
  <g stroke-linecap="butt" fill="none">
    <g stroke="url(#mtLo)" stroke-width="5.6"><path d="M1153 464.6 L1234 482.4"/><path d="M1158 479.4 L1236 486.6"/><path d="M1158 495.8 L1236 491.6"/><path d="M1153 513 L1234 498.2"/></g>
    <g stroke="url(#mtLd)" stroke-width="4"><path d="M1153 464.6 L1234 482.4"/><path d="M1158 479.4 L1236 486.6"/><path d="M1158 495.8 L1236 491.6"/><path d="M1153 513 L1234 498.2"/></g>
    <g stroke="url(#mtL)" stroke-width="2.9"><path d="M1153 464.6 L1234 482.4"/><path d="M1158 479.4 L1236 486.6"/><path d="M1158 495.8 L1236 491.6"/><path d="M1153 513 L1234 498.2"/></g>
    <g stroke="url(#mtRo)" stroke-width="5.6"><path d="M1387 465.4 L1306 482.4"/><path d="M1382 480 L1304 486.6"/><path d="M1382 495.8 L1304 491.6"/><path d="M1387 513 L1306 498.2"/></g>
    <g stroke="url(#mtRd)" stroke-width="4"><path d="M1387 465.4 L1306 482.4"/><path d="M1382 480 L1304 486.6"/><path d="M1382 495.8 L1304 491.6"/><path d="M1387 513 L1306 498.2"/></g>
    <g stroke="url(#mtR)" stroke-width="2.9"><path d="M1387 465.4 L1306 482.4"/><path d="M1382 480 L1304 486.6"/><path d="M1382 495.8 L1304 491.6"/><path d="M1387 513 L1306 498.2"/></g>
  </g>
  <!-- kinetochores -->
  <g>
    <ellipse cx="1247.9" cy="489.7" rx="15.4" ry="15.4" fill="url(#kinL)"/>
    <ellipse cx="1294.3" cy="489.7" rx="15.4" ry="15.4" fill="url(#kinR)"/>
    <g fill="none" stroke="#1c0b08" stroke-width="1.4" stroke-linecap="round">
      <path d="M1237.6 478.3 A15.4 15.4 0 1 1 1237.6 501.1"/>
      <path d="M1304.6 478.3 A15.4 15.4 0 1 0 1304.6 501.1"/>
    </g>
    <g fill="none" stroke="#8f0d16" stroke-width="0.9" stroke-linecap="round" opacity=".9">
      <path d="M1244 472.6 A17.6 17.6 0 0 1 1265.4 492"/>
      <path d="M1248 471.6 A18.6 18.6 0 0 1 1266.4 486"/>
      <path d="M1266 494 A18 18 0 0 1 1250 507.6"/>
      <path d="M1298.2 472.6 A17.6 17.6 0 0 0 1276.8 492"/>
      <path d="M1294.2 471.6 A18.6 18.6 0 0 0 1275.8 486"/>
      <path d="M1276.2 494 A18 18 0 0 0 1292.2 507.6"/>
    </g>
  </g>
  <!-- box & leader lines -->
  <g fill="none" stroke="#000" stroke-width="3.4">
    <rect x="1210.2" y="459.4" width="121.7" height="60" stroke-width="3.7"/>
    <path d="M1098.6 490 H1209"/>
    <path d="M1375.6 467.6 L1447.6 423.6"/>
    <path d="M1294.4 494.4 L1447.6 606.6" stroke-width="4" stroke-linecap="round"/>
    <path d="M1223.8 709.6 V764.8 H1318 V709.6" stroke-width="3.2"/>
    <path d="M1270.8 764.8 V791.6" stroke-width="3.2"/>
  </g>
  <!-- labels -->
  <g font-family="Liberation Sans" font-size="25" fill="#161616">
    <text id="lab1" x="955.6" y="497.8">Centromeric</text>
    <text x="955.6" y="525.8">region</text>
    <text id="lab2" x="1453.8" y="419.8">Mitotic spindle</text>
    <text x="1453.8" y="447.9">microtubules</text>
    <text id="lab3" x="1453.8" y="619.6">Kinetochore</text>
    <text id="lab4" x="1174.2" y="824.4">Sister chromatids</text>
  </g>
</svg>
</div>
<!-- right notch -->
<div class="abs" style="left:1862.5px;top:963px;width:50px;height:50px;background:#f7faf2;border-top-left-radius:12px"></div>
<svg class="abs" style="left:1883px;top:979px" width="8" height="20" viewBox="0 0 8 20"><circle cx="4" cy="3.4" r="1.7" fill="#474a45"/><circle cx="4" cy="10" r="1.7" fill="#474a45"/><circle cx="4" cy="16.6" r="1.7" fill="#474a45"/></svg>
<!--RIGHT-END-->
<!--BORDERS-START-->
<svg class="abs" style="left:0;top:120px;pointer-events:none" width="1920" height="900" viewBox="0 120 1920 900">
  <path d="M24.5 129.5 H830.5 A12 12 0 0 1 842.5 141.5 V951 A12 12 0 0 1 830.5 963 H674 A12 12 0 0 0 662 975 V995.5 A12 12 0 0 1 650 1007.5 H24.5 A12 12 0 0 1 12.5 995.5 V141.5 A12 12 0 0 1 24.5 129.5Z" fill="none" stroke="#b7bcb1" stroke-width="1.3"/>
  <path d="M870.5 129.7 H1894.3 A12 12 0 0 1 1906.3 141.7 V951 A12 12 0 0 1 1894.3 963 H1874.4 A12 12 0 0 0 1862.4 975 V995.2 A12 12 0 0 1 1850.4 1007.2 H870.5 A12 12 0 0 1 858.5 995.2 V141.7 A12 12 0 0 1 870.5 129.7Z" fill="none" stroke="#69726a" stroke-width="1.6"/>
</svg>
<!--BORDERS-END-->
<!--TASKBAR-START-->
<div id="taskbar" class="abs"></div>
<div class="abs" style="left:0;top:1020px;width:72px;height:60px;background:#242b32"></div>
<svg class="abs" style="left:24px;top:1038px" width="25" height="24" viewBox="0 0 25 24"><path d="M0 3.4 L10.2 2 V11.4 H0Z M11.6 1.8 L25 0 V11.4 H11.6Z M0 12.6 H10.2 V22 L0 20.6Z M11.6 12.6 H25 V24 L11.6 22.2Z" fill="#fff"/></svg>
<div class="abs" style="left:71.5px;top:1020px;width:432.5px;height:60px;background:#f2f2f2;border:2px solid #bfbfbf"></div>
<svg class="abs" style="left:89px;top:1037px" width="27" height="26" viewBox="0 0 27 26"><circle cx="17" cy="9.4" r="7.6" fill="none" stroke="#1c1c1c" stroke-width="1.7"/><path d="M11.4 15 L1.6 24.6" stroke="#1c1c1c" stroke-width="1.9"/></svg>
<div class="t" id="tsearch" style="left:132.2px;top:1041px;font-size:22.5px;letter-spacing:-0.15px;color:#2a2a2a">Type here to search</div>
<!-- task view -->
<svg class="abs" style="left:527px;top:1037px" width="27" height="26" viewBox="0 0 27 26"><g fill="none" stroke="#fff" stroke-width="1.4"><path d="M1.3 1 V4 H16.4 V1"/><rect x="1.3" y="7.3" width="15.1" height="10.1"/><path d="M1.3 24 V21 H16.4 V24"/><path d="M23.3 1 V24"/></g><rect x="21.8" y="8" width="3.1" height="3.1" fill="#fff"/></svg>
<!-- Edge -->
<svg class="abs" style="left:598px;top:1031px" width="38" height="38" viewBox="0 0 38 38">
  <defs><linearGradient id="eg1" x1="0" y1=".35" x2="1" y2=".6"><stop offset="0" stop-color="#1f9be2"/><stop offset=".4" stop-color="#33bfd6"/><stop offset=".75" stop-color="#4fd08a"/><stop offset="1" stop-color="#6ad84a"/></linearGradient>
  <linearGradient id="eg2" x1="0" y1="0" x2="0" y2="1"><stop offset="0" stop-color="#1b9de2"/><stop offset="1" stop-color="#0c59a4"/></linearGradient></defs>
  <path d="M19 1.5 C29 1.5 36.8 9 36.8 17.4 C36.8 23.4 32.6 27 27.8 27 C24 27 21.6 25.4 21.6 23.4 C21.6 21.8 23 21.2 23 18.8 C23 15.2 19.6 12.2 15 12.2 C8.6 12.2 2.6 16.6 1.6 22 C0 11 7.6 1.5 19 1.5Z" fill="url(#eg1)"/>
  <path d="M1.5 20 C1.2 30 9 36.6 18 36.6 C24 36.6 29 34.4 32.6 30 C33.4 29 32.6 28.2 31.6 28.8 C29.4 30 27 30.4 24.8 30.2 C17.8 29.8 12.6 24.2 13 17.6 C13.2 15 14.4 13 15.8 12.2 C8 11.4 1.8 15.6 1.5 20Z" fill="url(#eg2)"/>
  <path d="M13 17.6 C12.6 24.2 17.8 29.8 24.8 30.2 C20 31.2 10 29.4 8.6 21 C8.2 17.6 10.4 13.6 15.8 12.2 C14.4 13 13.2 15 13 17.6Z" fill="#1460b5"/>
</svg>
<!-- Store -->
<svg class="abs" style="left:673px;top:1031px" width="37" height="38" viewBox="0 0 37 38">
  <path d="M11 7 V4.6 A2 2 0 0 1 13 2.6 H24 A2 2 0 0 1 26 4.6 V7" fill="none" stroke="#2aa3ee" stroke-width="2.2"/>
  <path d="M1 6.4 H36 V32.4 A3.6 3.6 0 0 1 32.4 36 H4.6 A3.6 3.6 0 0 1 1 32.4Z" fill="#f3f3f3"/>
  <rect x="11" y="13.6" width="7" height="7" fill="#f25022"/><rect x="19.2" y="13.6" width="7" height="7" fill="#7fba00"/><rect x="11" y="21.8" width="7" height="7" fill="#00a4ef"/><rect x="19.2" y="21.8" width="7" height="7" fill="#ffb900"/>
</svg>
<!-- Explorer -->
<svg class="abs" style="left:750px;top:1036px" width="34" height="29" viewBox="0 0 34 29">
  <path d="M0.6 3 A2 2 0 0 1 2.6 1 H12 L15 4 H31.4 A2 2 0 0 1 33.4 6 V9 H0.6Z" fill="#e8a317"/>
  <path d="M0.6 6.4 H33.4 V24.6 A2 2 0 0 1 31.4 26.6 H2.6 A2 2 0 0 1 0.6 24.6Z" fill="#fdd35c"/>
  <path d="M6.6 26.6 V16.4 A1.8 1.8 0 0 1 8.4 14.6 H25.6 A1.8 1.8 0 0 1 27.4 16.4 V26.6 H22.4 V20.4 H11.6 V26.6Z" fill="#3a8ee0"/>
  <path d="M6.6 26.6 H11.6 V28 H6.6Z M22.4 26.6 H27.4 V28 H22.4Z" fill="#2b6fbd"/>
</svg>
<!-- active app highlight -->
<div class="abs" style="left:881px;top:1020px;width:73.4px;height:60px;background:#5a514e"></div>
<!-- chrome icons -->
<svg width="0" height="0" style="position:absolute"><defs>
<g id="chrome">
  <circle cx="18" cy="18" r="18" fill="#fff"/>
  <path d="M18 0 A18 18 0 0 1 33.6 9 H18 A9 9 0 0 0 10.2 13.5 L2.4 9 A18 18 0 0 1 18 0Z" fill="#ea4335"/>
  <path d="M33.6 9 A18 18 0 0 1 18 36 L25.8 22.5 A9 9 0 0 0 25.8 13.5 L25.8 9Z" fill="#fbbc04"/>
  <path d="M33.6 9 H18 A9 9 0 0 1 25.8 22.5 L18 36 A18 18 0 0 0 33.6 9Z" fill="#fbbc04"/>
  <path d="M2.4 9 L10.2 13.5 A9 9 0 0 0 25.8 22.5 L18 36 A18 18 0 0 1 2.4 9Z" fill="#34a853"/>
  <circle cx="18" cy="18" r="8.6" fill="#fff"/>
  <circle cx="18" cy="18" r="6.9" fill="#4285f4"/>
</g></defs></svg>
<svg class="abs" style="left:823.8px;top:1031.7px" width="36" height="36" viewBox="0 0 36 36"><use href="#chrome"/></svg>
<div class="abs" style="left:839.7px;top:1047.9px;width:22px;height:22px;border-radius:50%;background:#c23616"></div>
<div class="t" style="left:846px;top:1052.4px;font-size:13.5px;font-weight:bold;color:#f6d9cf">R</div>
<svg class="abs" style="left:899px;top:1031.7px" width="36" height="36" viewBox="0 0 36 36"><use href="#chrome"/></svg>
<div class="abs" style="left:915.8px;top:1049.6px;width:19px;height:19px;border-radius:50%;background:#7b1fa2"></div>
<div class="t" style="left:921.4px;top:1053.6px;font-size:11.5px;color:#fff">R</div>
<svg class="abs" style="left:974px;top:1031.7px" width="36" height="36" viewBox="0 0 36 36"><use href="#chrome"/></svg>
<!-- raccoon badge -->
<svg class="abs" style="left:989px;top:1049px" width="26" height="20" viewBox="0 0 26 20">
  <path d="M4 3 L7 5.4 M22 3 L19 5.4" stroke="#8f979c" stroke-width="3" stroke-linecap="round"/>
  <ellipse cx="13" cy="11.4" rx="11.6" ry="8.2" fill="#9aa2a7"/>
  <ellipse cx="7.6" cy="11.4" rx="4.4" ry="3.4" fill="#3b4044"/><ellipse cx="18.4" cy="11.4" rx="4.4" ry="3.4" fill="#3b4044"/>
  <circle cx="7.8" cy="11.4" r="2.1" fill="#5fd0ff"/><circle cx="18.2" cy="11.4" r="2.1" fill="#5fd0ff"/>
  <ellipse cx="13" cy="15.6" rx="3.4" ry="2.4" fill="#d6dadd"/><circle cx="13" cy="15" r="1.1" fill="#2a2d30"/>
</svg>
<!-- settings gear -->
<svg class="abs" style="left:1052.8px;top:1036.2px" width="27.6" height="27.6" viewBox="0 0 30 30">
  <g transform="translate(15,15)">
    <g fill="#fff">
      <rect x="-3.2" y="-14.6" width="6.4" height="7" rx="1"/><rect x="-3.2" y="7.6" width="6.4" height="7" rx="1"/>
      <rect x="-3.2" y="-14.6" width="6.4" height="7" rx="1" transform="rotate(45)"/><rect x="-3.2" y="7.6" width="6.4" height="7" rx="1" transform="rotate(45)"/>
      <rect x="-3.2" y="-14.6" width="6.4" height="7" rx="1" transform="rotate(90)"/><rect x="-3.2" y="7.6" width="6.4" height="7" rx="1" transform="rotate(90)"/>
      <rect x="-3.2" y="-14.6" width="6.4" height="7" rx="1" transform="rotate(135)"/><rect x="-3.2" y="7.6" width="6.4" height="7" rx="1" transform="rotate(135)"/>
    </g>
    <circle r="8.4" fill="none" stroke="#fff" stroke-width="4.6"/>
  </g>
</svg>
<!-- running indicators -->
<div class="abs" style="left:812px;top:1077.3px;width:61px;height:2.7px;background:#76b9ed"></div>
<div class="abs" style="left:881px;top:1077.3px;width:73.4px;height:2.7px;background:#76b9ed"></div>
<div class="abs" style="left:961.5px;top:1077.3px;width:61.3px;height:2.7px;background:#76b9ed"></div>
<div class="abs" style="left:1037.2px;top:1077.3px;width:61px;height:2.7px;background:#76b9ed"></div>
<!-- weather -->
<svg class="abs" style="left:1318px;top:1030px" width="40" height="40" viewBox="0 0 40 40">
  <defs><linearGradient id="cl" x1="0" y1="0" x2="0" y2="1"><stop offset="0" stop-color="#c9dcfb"/><stop offset="1" stop-color="#7ea9f0"/></linearGradient>
  <radialGradient id="sun" cx=".4" cy=".4" r=".7"><stop offset="0" stop-color="#ffc43a"/><stop offset="1" stop-color="#f08a1c"/></radialGradient></defs>
  <circle cx="28.6" cy="10.6" r="8" fill="url(#sun)"/>
  <path d="M9.4 29 C4.4 29 1 25.8 1 21.8 C1 18 3.8 15 7.8 14.6 C9 10.4 12.8 7.6 17.4 7.6 C22.2 7.6 26 10.6 27 15 C27.6 14.8 28.4 14.8 29 14.8 C33.4 14.8 36.8 18 36.8 22 C36.8 26 33.4 29 29 29Z" fill="url(#cl)"/>
  <path d="M22.4 22.6 C26 26.2 28.6 28.8 28.6 31.8 A4.4 4.4 0 0 1 19.8 31.8 C19.8 29 21 26.4 22.4 22.6Z" fill="#1570e8"/>
</svg>
<div class="t" id="wtemp" style="left:1366.3px;top:1041.4px;font-size:21.8px;color:#fff;letter-spacing:-1.3px">4°C</div>
<div class="t" id="wtxt" style="left:1413px;top:1041.4px;font-size:21.8px;color:#fff;letter-spacing:-0.35px">Light rain</div>
<!-- tray -->
<svg class="abs" style="left:1536px;top:1042px" width="21" height="13" viewBox="0 0 21 13"><path d="M1.6 11.6 L10.5 2.4 L19.4 11.6" fill="none" stroke="#fff" stroke-width="1.5"/></svg>
<svg class="abs" style="left:1569px;top:1036px" width="28" height="30" viewBox="0 0 28 30">
  <path d="M2 5.6 L24.6 2 V22.4 L2 25.6Z" fill="none" stroke="#f0f0f0" stroke-width="1.4"/>
  <path d="M8.4 12.6 A4.6 4.6 0 0 1 16.6 10.4 M16.8 7.6 V10.8 H13.6 M17.4 15.6 A4.6 4.6 0 0 1 9.2 17.6 M9 20.4 V17.2 H12.2" fill="none" stroke="#f0f0f0" stroke-width="1.2"/>
  <circle cx="19.3" cy="21.6" r="5.8" fill="#e81123"/>
</svg>
<svg class="abs" style="left:1604px;top:1040px" width="28" height="20" viewBox="0 0 28 20">
  <rect x="8.2" y="5.4" width="16.6" height="9.6" fill="none" stroke="#fff" stroke-width="1.4"/><rect x="10" y="7.2" width="13" height="6" fill="#fff"/><rect x="25.4" y="8" width="1.6" height="4.4" fill="#fff"/>
  <path d="M2.6 1 V4.4 M6.6 1 V4.4 M1.4 4.6 H7.8 V7.4 A3.2 3.2 0 0 1 1.4 7.4Z M4.6 10.6 V13.4 H8" fill="none" stroke="#fff" stroke-width="1.3"/>
</svg>
<svg class="abs" style="left:1644px;top:1040px" width="24" height="22" viewBox="0 0 24 22">
  <g fill="none" stroke="#8d9094" stroke-width="1.5"><path d="M2.4 20 A17.6 17.6 0 0 1 20 2.4"/><path d="M8 20 A12 12 0 0 1 20 8"/><path d="M13.4 20 A6.6 6.6 0 0 1 20 13.4"/></g><circle cx="19" cy="19" r="1.7" fill="#e8e8e8"/>
</svg>
<div class="t" id="eng" style="left:1682.2px;top:1042.6px;font-size:17px;color:#fff;letter-spacing:-1px">ENG</div>
<div class="t" id="clk" style="left:1750.8px;top:1029.4px;font-size:17.3px;color:#fff;letter-spacing:-0.15px">2:10 PM</div>
<div class="t" id="date" style="left:1736.7px;top:1056px;font-size:18.2px;color:#fff;letter-spacing:-0.05px">2026-04-19</div>
<svg class="abs" style="left:1856px;top:1036px" width="40" height="40" viewBox="0 0 40 40">
  <path d="M2.4 2 H26.6 V20.4 H12.6 L8.4 25 V20.4 H2.4Z" fill="#fff"/>
  <path d="M7 7.6 H22 M7 11.6 H22 M7 15.6 H22" stroke="#2a2d31" stroke-width="1.2"/>
  <circle cx="25.4" cy="25.6" r="10.6" fill="#2a2d31" stroke="#9a9da1" stroke-width="1.1"/>
  <text x="25.4" y="31.4" font-family="Liberation Sans" font-size="16" font-weight="bold" fill="#fff" text-anchor="middle">3</text>
</svg>
<div class="abs" style="left:1912.4px;top:1020px;width:1.2px;height:60px;background:#8b8d90"></div>
<!--TASKBAR-END-->
</body></html>
